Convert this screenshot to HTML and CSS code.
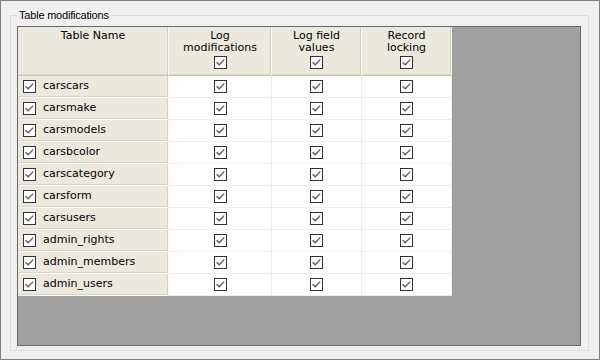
FILE: index.html
```html
<!DOCTYPE html>
<html>
<head>
<meta charset="utf-8">
<link rel="stylesheet" href="styles.css">
</head>
<body>
<svg class="defs" width="0" height="0">
  <symbol id="tick" viewBox="0 0 11 11">
    <polyline points="1.5,5.2 4.2,7.8 9.2,2.6" fill="none" stroke="#5a5a5a" stroke-width="1.3"/>
  </symbol>
</svg>
<div class="win">
  <div class="group">
    <span class="group-title">Table modifications</span>
    <div class="grid">
      <div class="tbl">
        <div class="hd">
          <span class="hd-text">Table Name</span>
        </div>
        <div class="hd">
          <span class="hd-text">Log<br>modifications</span>
          <span class="cb"><svg><use href="#tick"/></svg></span>
        </div>
        <div class="hd">
          <span class="hd-text">Log field<br>values</span>
          <span class="cb"><svg><use href="#tick"/></svg></span>
        </div>
        <div class="hd">
          <span class="hd-text">Record<br>locking</span>
          <span class="cb"><svg><use href="#tick"/></svg></span>
        </div>

        <div class="rh"><span class="cb"><svg><use href="#tick"/></svg></span><span class="rh-text">carscars</span></div>
        <div class="dc"><span class="cb"><svg><use href="#tick"/></svg></span></div>
        <div class="dc"><span class="cb"><svg><use href="#tick"/></svg></span></div>
        <div class="dc"><span class="cb"><svg><use href="#tick"/></svg></span></div>

        <div class="rh"><span class="cb"><svg><use href="#tick"/></svg></span><span class="rh-text">carsmake</span></div>
        <div class="dc"><span class="cb"><svg><use href="#tick"/></svg></span></div>
        <div class="dc"><span class="cb"><svg><use href="#tick"/></svg></span></div>
        <div class="dc"><span class="cb"><svg><use href="#tick"/></svg></span></div>

        <div class="rh"><span class="cb"><svg><use href="#tick"/></svg></span><span class="rh-text">carsmodels</span></div>
        <div class="dc"><span class="cb"><svg><use href="#tick"/></svg></span></div>
        <div class="dc"><span class="cb"><svg><use href="#tick"/></svg></span></div>
        <div class="dc"><span class="cb"><svg><use href="#tick"/></svg></span></div>

        <div class="rh"><span class="cb"><svg><use href="#tick"/></svg></span><span class="rh-text">carsbcolor</span></div>
        <div class="dc"><span class="cb"><svg><use href="#tick"/></svg></span></div>
        <div class="dc"><span class="cb"><svg><use href="#tick"/></svg></span></div>
        <div class="dc"><span class="cb"><svg><use href="#tick"/></svg></span></div>

        <div class="rh"><span class="cb"><svg><use href="#tick"/></svg></span><span class="rh-text">carscategory</span></div>
        <div class="dc"><span class="cb"><svg><use href="#tick"/></svg></span></div>
        <div class="dc"><span class="cb"><svg><use href="#tick"/></svg></span></div>
        <div class="dc"><span class="cb"><svg><use href="#tick"/></svg></span></div>

        <div class="rh"><span class="cb"><svg><use href="#tick"/></svg></span><span class="rh-text">carsform</span></div>
        <div class="dc"><span class="cb"><svg><use href="#tick"/></svg></span></div>
        <div class="dc"><span class="cb"><svg><use href="#tick"/></svg></span></div>
        <div class="dc"><span class="cb"><svg><use href="#tick"/></svg></span></div>

        <div class="rh"><span class="cb"><svg><use href="#tick"/></svg></span><span class="rh-text">carsusers</span></div>
        <div class="dc"><span class="cb"><svg><use href="#tick"/></svg></span></div>
        <div class="dc"><span class="cb"><svg><use href="#tick"/></svg></span></div>
        <div class="dc"><span class="cb"><svg><use href="#tick"/></svg></span></div>

        <div class="rh"><span class="cb"><svg><use href="#tick"/></svg></span><span class="rh-text">admin_rights</span></div>
        <div class="dc"><span class="cb"><svg><use href="#tick"/></svg></span></div>
        <div class="dc"><span class="cb"><svg><use href="#tick"/></svg></span></div>
        <div class="dc"><span class="cb"><svg><use href="#tick"/></svg></span></div>

        <div class="rh"><span class="cb"><svg><use href="#tick"/></svg></span><span class="rh-text">admin_members</span></div>
        <div class="dc"><span class="cb"><svg><use href="#tick"/></svg></span></div>
        <div class="dc"><span class="cb"><svg><use href="#tick"/></svg></span></div>
        <div class="dc"><span class="cb"><svg><use href="#tick"/></svg></span></div>

        <div class="rh"><span class="cb"><svg><use href="#tick"/></svg></span><span class="rh-text">admin_users</span></div>
        <div class="dc"><span class="cb"><svg><use href="#tick"/></svg></span></div>
        <div class="dc"><span class="cb"><svg><use href="#tick"/></svg></span></div>
        <div class="dc"><span class="cb"><svg><use href="#tick"/></svg></span></div>
      </div>
    </div>
  </div>
</div>
</body>
</html>
```

FILE: styles.css
```css
html, body {
  margin: 0;
  padding: 0;
  background: #f0f0f0;
}

.defs {
  position: absolute;
  width: 0;
  height: 0;
  overflow: hidden;
}

.win {
  width: 600px;
  height: 360px;
  box-sizing: border-box;
  border: 1px solid #7f7f7f;
  background: #f0f0f0;
  padding: 14px 10px 8px 9px;
}

.group {
  position: relative;
  height: 336px;
  box-sizing: border-box;
  border: 1px solid #dcdcdc;
  padding: 10px 6px 3px 6px;
}

.group-title {
  position: absolute;
  left: 6px;
  top: -7px;
  padding: 0 2px;
  background: #f0f0f0;
  font-family: "Liberation Sans", Arial, sans-serif;
  font-size: 11px;
  line-height: 13px;
  letter-spacing: -0.2px;
  color: #000;
}

.grid {
  width: 564px;
  height: 320px;
  box-sizing: border-box;
  border: 1px solid #696969;
  background: #a0a0a0;
}

.tbl {
  display: grid;
  grid-template-columns: 151px 103px 90px 90px;
  grid-template-rows: 49px repeat(10, 22px);
  width: 434px;
  font-family: "DejaVu Sans", Verdana, sans-serif;
  font-size: 11px;
  color: #000;
}

.hd {
  box-sizing: border-box;
  background: #ebe9dc;
  border-right: 1px solid #f8f7f1;
  border-bottom: 1px solid #c9c6b6;
  box-shadow: inset -1px 0 0 #d3d0c2, inset 0 -1px 0 #dad7ca;
  display: flex;
  flex-direction: column;
  align-items: center;
  padding-top: 3px;
}

.hd-text {
  line-height: 12px;
  text-align: center;
}

.hd .cb {
  margin-top: 2px;
}

.rh {
  box-sizing: border-box;
  background: #ebe9dc;
  border-right: 1px solid #f8f7f1;
  border-bottom: 1px solid #f8f7f1;
  box-shadow: inset -1px 0 0 #d3d0c2, inset 0 -1px 0 #dad7ca;
  display: flex;
  align-items: center;
  padding-left: 5px;
  gap: 7px;
}

.rh-text {
  line-height: 14px;
  padding-bottom: 2px;
}

.dc {
  box-sizing: border-box;
  background: #fff;
  border-right: 1px solid #efeee1;
  border-bottom: 1px solid #efeee1;
  display: flex;
  align-items: center;
  justify-content: center;
}

.cb {
  display: block;
  width: 13px;
  height: 13px;
  box-sizing: border-box;
  border: 1px solid #333;
  background: #fff;
  flex: none;
}

.cb svg {
  display: block;
  width: 11px;
  height: 11px;
}
```
